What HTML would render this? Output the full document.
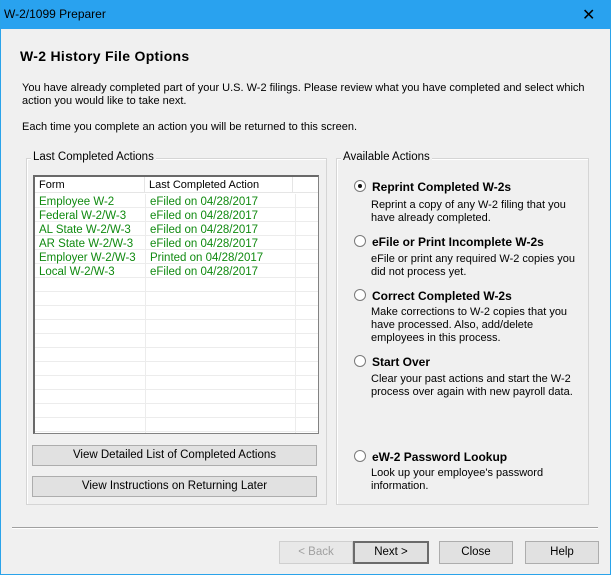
<!DOCTYPE html>
<html><head><style>
*{margin:0;padding:0;box-sizing:border-box}
body{width:611px;height:575px;background:#f0f0f0;font-family:"Liberation Sans",sans-serif;font-size:11px;color:#000;position:relative;overflow:hidden}
.a{position:absolute;white-space:nowrap}
.win{position:absolute;left:0;top:0;width:611px;height:575px;border:1px solid #2aa3ea;border-top:none}
.title{position:absolute;left:0;top:0;width:611px;height:29px;background:#29a2ef}
.grp{position:absolute;border:1px solid #d5d5d5;box-shadow:inset 1px 1px 0 #fff}
.lg{position:absolute;background:#f0f0f0;padding:0 2px;top:-8px;left:4px;font-size:11.5px}
.btn{position:absolute;background:#e1e1e1;border:1px solid #adadad;text-align:center;line-height:19px;font-size:11.5px}
.list{position:absolute;left:33px;top:175px;width:286px;height:259px;background:#fff;border:1px solid #828282;border-left:2px solid #696969;border-top:2px solid #696969;overflow:hidden}
.g{color:#108a10}
.radio{position:absolute;width:12px;height:12px;border-radius:50%;background:#fff;border:1px solid #7a7a7a}
.radio.on::after{content:"";position:absolute;left:3px;top:3px;width:4px;height:4px;border-radius:50%;background:#111}
.b{font-weight:bold;font-size:12px}
.d{line-height:13px;font-size:11px}
</style></head><body>
<div class="title"></div>
<div class="a" style="left:4px;top:7px;font-size:12px">W-2/1099 Preparer</div>
<div class="a" style="left:582px;top:5px;font-size:16px;font-weight:300">✕</div>
<div class="win"></div>
<div class="a" style="left:20px;top:48px;font-size:14px;font-weight:bold;letter-spacing:0.3px">W-2 History File Options</div>
<div class="a d" style="left:22px;top:82px">You have already completed part of your U.S. W-2 filings. Please review what you have completed and select which<br>action you would like to take next.</div>
<div class="a" style="left:22px;top:121px">Each time you complete an action you will be returned to this screen.</div>

<div class="grp" style="left:26px;top:158px;width:301px;height:347px"><div class="lg">Last Completed Actions</div></div>
<div class="list">
<div class="a" style="left:0;top:0;width:284px;height:16px;background:#fff;border-bottom:1px solid #e5e5e5"></div>
<div class="a" style="left:109px;top:0;width:1px;height:16px;background:#e5e5e5"></div>
<div class="a" style="left:257px;top:0;width:1px;height:16px;background:#e5e5e5"></div>
<div class="a" style="left:4px;top:2px">Form</div>
<div class="a" style="left:114px;top:2px">Last Completed Action</div>
<svg class="a" style="left:0;top:17px" width="284" height="240">
<g stroke="#ececec" stroke-width="1">
<line x1="110.5" y1="0" x2="110.5" y2="240"/><line x1="260.5" y1="0" x2="260.5" y2="240"/>
<line x1="0" y1="13.5" x2="284" y2="13.5"/><line x1="0" y1="27.5" x2="284" y2="27.5"/><line x1="0" y1="41.5" x2="284" y2="41.5"/><line x1="0" y1="55.5" x2="284" y2="55.5"/><line x1="0" y1="69.5" x2="284" y2="69.5"/><line x1="0" y1="83.5" x2="284" y2="83.5"/><line x1="0" y1="97.5" x2="284" y2="97.5"/><line x1="0" y1="111.5" x2="284" y2="111.5"/><line x1="0" y1="125.5" x2="284" y2="125.5"/><line x1="0" y1="139.5" x2="284" y2="139.5"/><line x1="0" y1="153.5" x2="284" y2="153.5"/><line x1="0" y1="167.5" x2="284" y2="167.5"/><line x1="0" y1="181.5" x2="284" y2="181.5"/><line x1="0" y1="195.5" x2="284" y2="195.5"/><line x1="0" y1="209.5" x2="284" y2="209.5"/><line x1="0" y1="223.5" x2="284" y2="223.5"/><line x1="0" y1="237.5" x2="284" y2="237.5"/>
</g></svg>
<div class="a g" style="left:4px;top:18px;line-height:14px;font-size:11.5px">Employee W-2<br>Federal W-2/W-3<br>AL State W-2/W-3<br>AR State W-2/W-3<br>Employer W-2/W-3<br>Local W-2/W-3</div>
<div class="a g" style="left:115px;top:18px;line-height:14px;font-size:11.5px">eFiled on 04/28/2017<br>eFiled on 04/28/2017<br>eFiled on 04/28/2017<br>eFiled on 04/28/2017<br>Printed on 04/28/2017<br>eFiled on 04/28/2017</div>
</div>
<div class="btn" style="left:32px;top:445px;width:285px;height:21px">View Detailed List of Completed Actions</div>
<div class="btn" style="left:32px;top:476px;width:285px;height:21px">View Instructions on Returning Later</div>

<div class="grp" style="left:336px;top:158px;width:253px;height:347px"><div class="lg">Available Actions</div></div>
<div class="radio on" style="left:354px;top:180px"></div>
<div class="a b" style="left:372px;top:180px">Reprint Completed W-2s</div>
<div class="a d" style="left:371px;top:199px">Reprint a copy of any W-2 filing that you<br>have already completed.</div>
<div class="radio" style="left:354px;top:235px"></div>
<div class="a b" style="left:372px;top:235px">eFile or Print Incomplete W-2s</div>
<div class="a d" style="left:371px;top:253px">eFile or print any required W-2 copies you<br>did not process yet.</div>
<div class="radio" style="left:354px;top:289px"></div>
<div class="a b" style="left:372px;top:289px">Correct Completed W-2s</div>
<div class="a d" style="left:371px;top:306px">Make corrections to W-2 copies that you<br>have processed. Also, add/delete<br>employees in this process.</div>
<div class="radio" style="left:354px;top:355px"></div>
<div class="a b" style="left:372px;top:355px">Start Over</div>
<div class="a d" style="left:371px;top:373px">Clear your past actions and start the W-2<br>process over again with new payroll data.</div>
<div class="radio" style="left:354px;top:450px"></div>
<div class="a b" style="left:372px;top:450px">eW-2 Password Lookup</div>
<div class="a d" style="left:371px;top:467px">Look up your employee's password<br>information.</div>

<div class="a" style="left:12px;top:527px;width:586px;height:2px;border-top:1px solid #a0a0a0;border-bottom:1px solid #fff"></div>
<div class="btn" style="left:279px;top:541px;width:74px;height:23px;line-height:21px;color:#a0a0a0;border-color:#cfcfcf;background:#e8e8e8">&lt; Back</div>
<div class="btn" style="left:353px;top:541px;width:76px;height:23px;line-height:19px;border:2px solid #6b6b6b">Next &gt;</div>
<div class="btn" style="left:439px;top:541px;width:74px;height:23px;line-height:21px">Close</div>
<div class="btn" style="left:525px;top:541px;width:74px;height:23px;line-height:21px">Help</div>
</body></html>
